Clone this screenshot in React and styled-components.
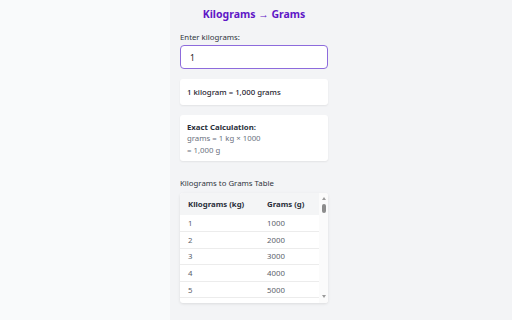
import React from "react";
import styled, { createGlobalStyle } from "styled-components";

const Global = createGlobalStyle`
  html, body { margin: 0; padding: 0; }
  body { font-family: "Noto Sans", "Open Sans", sans-serif; background: #f3f4f6; }
  * { box-sizing: border-box; }
`;

const Page = styled.div`
  display: flex;
  height: 320px;
  overflow: hidden;
`;

const SidePane = styled.div`
  width: 170px;
  flex: none;
  background: #f9fafb;
`;

const Main = styled.main`
  flex: 1;
  background: #f3f4f6;
  padding: 0 10px;
`;

const Column = styled.div`
  width: 148px;
  display: flex;
  flex-direction: column;
`;

const Title = styled.h1`
  margin: 7px 0 0;
  font-size: 10.5px;
  line-height: 14px;
  font-weight: 700;
  color: #5f17c6;
  text-align: center;
`;

const Label = styled.label`
  display: block;
  margin-top: ${(p) => p.$gap}px;
  font-size: 7.8px;
  line-height: 11px;
  color: #2f3440;
`;

const Input = styled.input`
  margin-top: 2.5px;
  height: 24px;
  width: 100%;
  border: 1px solid #8d6bdc;
  border-radius: 4px;
  background: #fff;
  padding: 0 9px;
  font-family: inherit;
  font-size: 8.5px;
  color: #222;
  outline: none;
`;

const Card = styled.div`
  margin-top: 10px;
  background: #fff;
  border-radius: 3px;
  box-shadow: 0 1px 2px rgba(0, 0, 0, 0.07);
  padding: ${(p) => p.$pad};
  font-size: 7.8px;
  line-height: ${(p) => p.$lh}px;
`;

const ResultText = styled.div`
  color: #1f2430;
  font-weight: 500;
`;

const CalcTitle = styled.div`
  font-weight: 700;
  color: #2a2f3a;
`;

const CalcLine = styled.div`
  color: #6b7280;
`;

const TableBox = styled.div`
  margin-top: 4.5px;
  height: 110px;
  background: #fff;
  border-radius: 3px;
  box-shadow: 0 1px 3px rgba(0, 0, 0, 0.1);
  display: flex;
  overflow: hidden;
`;

const Viewport = styled.div`
  flex: 1;
`;

const Table = styled.table`
  width: 100%;
  border-collapse: collapse;
  table-layout: fixed;
  font-size: 7.8px;
`;

const HeadCell = styled.th`
  height: 22px;
  padding: 0 8px;
  text-align: left;
  font-weight: 700;
  color: #2a2f3a;
  background: #f4f5f6;
  width: ${(p) => (p.$w ? `${p.$w}px` : "auto")};
`;

const Cell = styled.td`
  height: 16.6px;
  padding: 0 8px;
  color: #5b616b;
  border-bottom: 1px solid #ececec;
`;

const ScrollTrack = styled.div`
  width: 9px;
  flex: none;
  background: #fbfbfb;
  display: flex;
  flex-direction: column;
  align-items: center;
  padding: 4px 0 5px;
`;

const Arrow = styled.div`
  width: 0;
  height: 0;
  border-left: 2.5px solid transparent;
  border-right: 2.5px solid transparent;
  ${(p) =>
    p.$down
      ? "border-top: 3px solid #9a9a9a;"
      : "border-bottom: 3px solid #9a9a9a;"}
`;

const Thumb = styled.div`
  margin-top: 4px;
  width: 4px;
  height: 9px;
  border-radius: 2px;
  background: #8c8c8c;
`;

const Spacer = styled.div`
  flex: 1;
`;

const rows = [1, 2, 3, 4, 5];

export default function App() {
  return (
    <>
      <Global />
      <Page>
        <SidePane />
        <Main>
          <Column>
            <Title>Kilograms → Grams</Title>
            <Label $gap={10.5} htmlFor="kg">Enter kilograms:</Label>
            <Input id="kg" defaultValue="1" />
            <Card $pad="7.5px 7px" $lh={11}>
              <ResultText>1 kilogram = 1,000 grams</ResultText>
            </Card>
            <Card $pad="6.5px 7px 5px" $lh={11.5}>
              <CalcTitle>Exact Calculation:</CalcTitle>
              <CalcLine>grams = 1 kg × 1000</CalcLine>
              <CalcLine>= 1,000 g</CalcLine>
            </Card>
            <Label $gap={16.5}>Kilograms to Grams Table</Label>
            <TableBox>
              <Viewport>
                <Table>
                  <thead>
                    <tr>
                      <HeadCell $w={79}>Kilograms (kg)</HeadCell>
                      <HeadCell>Grams (g)</HeadCell>
                    </tr>
                  </thead>
                  <tbody>
                    {rows.map((r) => (
                      <tr key={r}>
                        <Cell>{r}</Cell>
                        <Cell>{r * 1000}</Cell>
                      </tr>
                    ))}
                  </tbody>
                </Table>
              </Viewport>
              <ScrollTrack>
                <Arrow />
                <Thumb />
                <Spacer />
                <Arrow $down />
              </ScrollTrack>
            </TableBox>
          </Column>
        </Main>
      </Page>
    </>
  );
}
